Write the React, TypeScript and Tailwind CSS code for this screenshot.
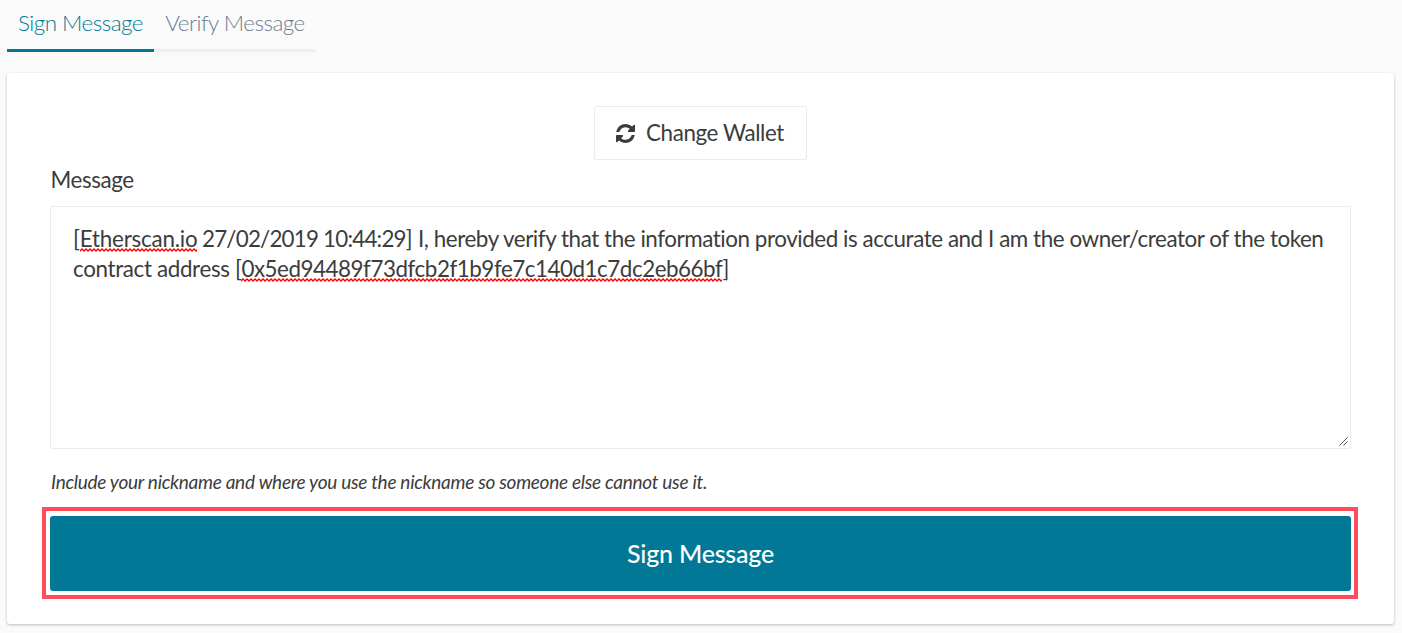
import React, { useId } from "react";

function Misspelled({ children }: { children: React.ReactNode }) {
  const id = useId();
  return (
    <span className="relative inline-block">
      {children}
      <svg className="absolute bottom-[2px] left-0 h-[4px] w-full">
        <defs>
          <pattern id={id} width="4" height="4" patternUnits="userSpaceOnUse">
            <path d="M-1 2L0 3L2 1L4 3L5 2" fill="none" stroke="#ff0000" strokeWidth="1.3" />
          </pattern>
        </defs>
        <rect width="100%" height="4" fill={`url(#${id})`} />
      </svg>
    </span>
  );
}

function RefreshIcon() {
  return (
    <svg className="h-[19px] w-[19px]" viewBox="0 0 1536 1536" fill="currentColor">
      <path d="M1511 928q0 5-1 7-64 268-268 434.500t-478 166.500q-146 0-282.500-55t-243.500-157l-129 129q-19 19-45 19t-45-19-19-45v-448q0-26 19-45t45-19h448q26 0 45 19t19 45-19 45l-137 137q71 66 161 102t187 36q134 0 250-65t186-179q11-17 53-117 8-23 30-23h192q13 0 22.500 9.500t9.500 22.500zM1536 128v448q0 26-19 45t-45 19h-448q-26 0-45-19t-19-45 19-45l138-138q-148-137-349-137-134 0-250 65t-186 179q-11 17-53 117-8 23-30 23h-199q-13 0-22.500-9.500t-9.500-22.500v-7q65-268 270-434.500t480-166.500q146 0 284 55.500t245 156.500l130-129q19-19 45-19t45 19 19 45z" />
    </svg>
  );
}

export default function App() {
  return (
    <div className="h-[633px] w-full overflow-hidden bg-[#fafafa] px-[7px] font-['Lato',sans-serif] text-[22.4px] text-[#3c3c3c]">
      <nav className="flex h-[52px] font-light tracking-[-0.5px]">
        <button className="w-[147px] border-b-3 border-[#007896] pb-[4px] text-[#007896]">Sign Message</button>
        <button className="w-[162px] border-b-3 border-[#efefef] pb-[4px] text-[#6b7c93]">Verify Message</button>
      </nav>
      <main className="mt-[21px] h-[551px] w-[1387px] rounded-[3px] bg-white px-[43px] pt-[33px] shadow-[0_1px_3px_rgba(0,0,0,0.25)]">
        <button className="mx-auto flex h-[54px] w-[213px] items-center justify-center gap-[11px] rounded-[2px] border border-[#e5ecf3] pr-px tracking-[-0.4px]">
          <RefreshIcon />
          Change Wallet
        </button>
        <div className="mt-[5px] h-[30px] pl-[0.5px] leading-[30px] tracking-[-0.4px]">Message</div>
        <div className="relative mt-[11px] h-[243px] w-[1301px] rounded-[2px] border border-[#e5ecf3] px-[22px] pt-[17px] leading-[30px]">
          <div className="flex whitespace-pre">
            <span className="w-[129px] tracking-[-0.2px]">[<Misspelled>Etherscan.io</Misspelled></span>
            <span className="w-[216px] tracking-[-0.8px]">27/02/2019 10:44:29]</span>
            <span className="tracking-[-0.44px]">I, hereby verify that the information provided is accurate and I am the owner/creator of the token</span>
          </div>
          <div className="flex whitespace-pre">
            <span className="w-[162px] tracking-[-0.35px]">contract address</span>
            <span className="tracking-[-0.47px]">[<Misspelled>0x5ed94489f73dfcb2f1b9fe7c140d1c7dc2eb66bf</Misspelled>]</span>
          </div>
          <svg className="absolute right-[2px] bottom-[2px] h-[9px] w-[9px]" viewBox="0 0 9 9" fill="none" stroke="#555" strokeWidth="1">
            <path d="M.5 8.5l8-8M4.5 8.5l4-4" />
          </svg>
        </div>
        <p className="mt-[19px] h-[28px] pl-px text-[19px] leading-[28px] tracking-[-0.28px] italic">Include your nickname and where you use the nickname so someone else cannot use it.</p>
        <div className="-ml-[8px] mt-[11px] h-[92px] w-[1316px] border-4 border-[#ff4e5b] pt-[5px] pr-[3px] pb-[4px] pl-[4px]">
          <button className="h-full w-full rounded-[3px] bg-[#007896] text-[25px] font-medium tracking-[-0.2px] text-white">Sign Message</button>
        </div>
      </main>
    </div>
  );
}
